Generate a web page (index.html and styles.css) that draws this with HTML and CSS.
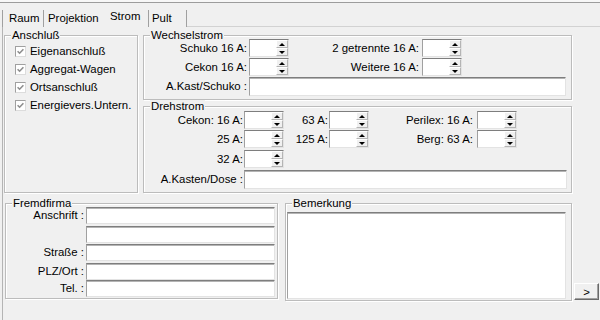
FILE: index.html
```html
<!DOCTYPE html>
<html lang="de">
<head>
    <meta charset="UTF-8">
    <meta name="viewport" content="width=device-width, initial-scale=1.0">
    <title>Strom</title>
    <link rel="stylesheet" href="styles.css">
</head>
<body>
<div class="topline"></div>
<div class="tabs">
    <div class="tab tab-raum">Raum</div>
    <div class="tab tab-projektion">Projektion</div>
    <div class="tab tab-strom active">Strom</div>
    <div class="tab tab-pult">Pult</div>
    <div class="tab-fill"></div>
</div>
<div class="panel">
    <div class="top-row">
        <div class="group anschluss">
            <span class="group-title">Anschluß</span>
            <label class="check"><span class="box"><svg width="7" height="7" viewBox="0 0 7 7"><path d="M0.6 3.2 L2.6 5.2 L6.4 1.2" fill="none" stroke="#8e8e8e" stroke-width="1.6"/></svg></span>Eigenanschluß</label>
            <label class="check"><span class="box"><svg width="7" height="7" viewBox="0 0 7 7"><path d="M0.6 3.2 L2.6 5.2 L6.4 1.2" fill="none" stroke="#8e8e8e" stroke-width="1.6"/></svg></span>Aggregat-Wagen</label>
            <label class="check"><span class="box"><svg width="7" height="7" viewBox="0 0 7 7"><path d="M0.6 3.2 L2.6 5.2 L6.4 1.2" fill="none" stroke="#8e8e8e" stroke-width="1.6"/></svg></span>Ortsanschluß</label>
            <label class="check"><span class="box"><svg width="7" height="7" viewBox="0 0 7 7"><path d="M0.6 3.2 L2.6 5.2 L6.4 1.2" fill="none" stroke="#8e8e8e" stroke-width="1.6"/></svg></span>Energievers.Untern.</label>
        </div>
        <div class="right-col">
            <div class="group wechsel">
                <span class="group-title">Wechselstrom</span>
                <div class="grid wechsel-grid">
                    <span class="lbl row-start">Schuko 16 A:</span>
                    <span class="spin"><input class="spin-field"><span class="spin-btns"><span class="spin-up"></span><span class="spin-down"></span></span></span>
                    <span class="lbl lbl-wide">2 getrennte 16 A:</span>
                    <span class="spin"><input class="spin-field"><span class="spin-btns"><span class="spin-up"></span><span class="spin-down"></span></span></span>

                    <span class="lbl row-start">Cekon 16 A:</span>
                    <span class="spin"><input class="spin-field"><span class="spin-btns"><span class="spin-up"></span><span class="spin-down"></span></span></span>
                    <span class="lbl lbl-wide">Weitere 16 A:</span>
                    <span class="spin"><input class="spin-field"><span class="spin-btns"><span class="spin-up"></span><span class="spin-down"></span></span></span>

                    <span class="lbl row-start">A.Kast/Schuko :</span>
                    <input class="field wide-field">
                </div>
            </div>
            <div class="group dreh">
                <span class="group-title">Drehstrom</span>
                <div class="grid dreh-grid">
                    <span class="lbl row-start">Cekon: 16 A:</span>
                    <span class="spin"><input class="spin-field"><span class="spin-btns"><span class="spin-up"></span><span class="spin-down"></span></span></span>
                    <span class="lbl">63 A:</span>
                    <span class="spin"><input class="spin-field"><span class="spin-btns"><span class="spin-up"></span><span class="spin-down"></span></span></span>
                    <span class="lbl lbl-perilex">Perilex: 16 A:</span>
                    <span class="spin"><input class="spin-field"><span class="spin-btns"><span class="spin-up"></span><span class="spin-down"></span></span></span>

                    <span class="lbl row-start">25 A:</span>
                    <span class="spin"><input class="spin-field"><span class="spin-btns"><span class="spin-up"></span><span class="spin-down"></span></span></span>
                    <span class="lbl">125 A:</span>
                    <span class="spin"><input class="spin-field"><span class="spin-btns"><span class="spin-up"></span><span class="spin-down"></span></span></span>
                    <span class="lbl lbl-perilex">Berg: 63 A:</span>
                    <span class="spin"><input class="spin-field"><span class="spin-btns"><span class="spin-up"></span><span class="spin-down"></span></span></span>

                    <span class="lbl row-start">32 A:</span>
                    <span class="spin"><input class="spin-field"><span class="spin-btns"><span class="spin-up"></span><span class="spin-down"></span></span></span>

                    <span class="lbl row-start">A.Kasten/Dose :</span>
                    <input class="field wide-field">
                </div>
            </div>
        </div>
    </div>
    <div class="bottom-row">
        <div class="group fremd">
            <span class="group-title">Fremdfirma</span>
            <div class="grid fremd-grid">
                <span class="lbl">Anschrift :</span>
                <input class="field">
                <span class="lbl"></span>
                <input class="field">
                <span class="lbl">Straße :</span>
                <input class="field">
                <span class="lbl">PLZ/Ort :</span>
                <input class="field">
                <span class="lbl">Tel. :</span>
                <input class="field">
            </div>
        </div>
        <div class="group bemerk">
            <span class="group-title">Bemerkung</span>
            <textarea class="note"></textarea>
        </div>
        <button class="next">&gt;</button>
    </div>
</div>
</body>
</html>
```

FILE: styles.css
```css
* {
    box-sizing: border-box;
}
body {
    margin: 0;
    width: 600px;
    height: 320px;
    overflow: hidden;
    background-color: #f0f0f0;
    font-family: "Liberation Sans", Arial, sans-serif;
    font-size: 11.4px;
    color: #000;
}
.topline {
    height: 3px;
    background-color: #f7f7f7;
    border-bottom: 1px solid #9c9c9c;
}

/* tab strip */
.tabs {
    display: flex;
    align-items: flex-end;
    height: 24px;
    margin-left: 2px;
}
.tab {
    height: 17px;
    line-height: 16px;
    white-space: nowrap;
}
.tab-raum {
    width: 42px;
    padding-left: 6px;
    border-left: 1px solid #a0a0a0;
    border-right: 1px solid #a0a0a0;
}
.tab-projektion {
    width: 59px;
    padding-left: 4px;
}
.tab.active {
    width: 45px;
    height: 21px;
    padding: 2px 0 0 7px;
}
.tab-pult {
    width: 39px;
    padding-left: 3px;
    border-left: 1px solid #a0a0a0;
    border-right: 1px solid #a0a0a0;
}
.tab-fill {
    flex: 1;
    height: 1px;
    border-bottom: 1px solid #d2d2d2;
}

/* panel */
.panel {
    height: 293px;
    margin-left: 2px;
    padding: 8px 0 0 1px;
    border-left: 1px solid #b4b4b4;
}
.top-row {
    display: flex;
    gap: 5px;
    height: 158px;
}
.group {
    border: 1px solid #bcbcbc;
    box-shadow: inset 1px 1px 0 #fff, 1px 1px 0 #fff;
}
.group-title {
    display: block;
    width: max-content;
    height: 13px;
    margin: -7px 0 0 6px;
    padding: 0 1px;
    line-height: 13px;
    background-color: #f0f0f0;
}

/* Anschluss */
.anschluss {
    width: 134px;
}
.check {
    display: flex;
    align-items: center;
    height: 18px;
    padding-left: 10px;
    white-space: nowrap;
}
.box {
    display: flex;
    align-items: center;
    justify-content: center;
    width: 11px;
    height: 11px;
    margin-right: 4px;
    border: 1px solid;
    border-color: #a0a0a0 #dcdcdc #dcdcdc #a0a0a0;
    background-color: #fff;
}

.right-col {
    display: flex;
    flex-direction: column;
    gap: 6px;
    width: 429px;
}
.wechsel {
    height: 65px;
}
.wechsel .group-title {
    margin-bottom: -3px;
}
.dreh {
    height: 87px;
}
.dreh .group-title {
    margin-bottom: -2px;
}

.grid {
    display: grid;
    align-items: start;
}
.wechsel-grid {
    grid-template-columns: 105px 40px 133px 40px 1fr;
    grid-template-rows: 19px 19px 19px;
}
.dreh-grid {
    grid-template-columns: 100px 40px 45px 40px 108px 40px 1fr;
    grid-template-rows: 19px 20px 20px 19px;
}
.row-start {
    grid-column-start: 1;
}
.lbl {
    padding-right: 2px;
    line-height: 18px;
    text-align: right;
    white-space: nowrap;
}
.wechsel-grid .lbl-wide {
    padding-right: 3px;
}
.dreh-grid .lbl {
    padding-right: 1px;
}
.dreh-grid .lbl-perilex {
    padding-right: 4px;
}

/* inputs */
.field,
.note {
    display: block;
    width: 100%;
    height: 17px;
    margin: 0;
    padding: 0 2px;
    border: 1px solid;
    border-color: #7e7e7e #e3e3e3 #e3e3e3 #a0a0a0;
    box-shadow: inset 0 1px 0 #b4b4b4;
    background-color: #fff;
    font: inherit;
    outline: none;
}
.wechsel .wide-field {
    grid-column: 2 / 6;
    height: 19px;
    margin-right: 5px;
    width: auto;
}
.dreh .wide-field {
    grid-column: 2 / 8;
    height: 19px;
    margin-right: 4px;
    width: auto;
}
.spin {
    display: flex;
    width: 40px;
    height: 18px;
    border: 1px solid;
    border-color: #7e7e7e #e3e3e3 #e3e3e3 #a0a0a0;
    background-color: #fff;
}
.spin-field {
    flex: 1;
    min-width: 0;
    margin: 0;
    padding: 0;
    border: none;
    background: transparent;
    outline: none;
}
.spin-btns {
    display: flex;
    flex-direction: column;
    width: 12px;
}
.spin-up,
.spin-down {
    flex: 1;
    display: flex;
    align-items: center;
    justify-content: center;
    background-color: #f0f0f0;
    border: 1px solid;
    border-color: #fff #b4b4b4 #b4b4b4 #fff;
}
.spin-up::before {
    content: "";
    border-left: 3px solid transparent;
    border-right: 3px solid transparent;
    border-bottom: 3px solid #000;
}
.spin-down::before {
    content: "";
    border-left: 3px solid transparent;
    border-right: 3px solid transparent;
    border-top: 3px solid #000;
}

/* bottom row */
.bottom-row {
    display: flex;
    align-items: flex-start;
    margin-top: 10px;
}
.fremd {
    width: 273px;
    height: 96px;
    margin-left: 1px;
}
.fremd .group-title {
    margin-bottom: -3px;
}
.fremd-grid {
    grid-template-columns: 80px 189px;
    grid-template-rows: 19px 18px 19px 17px 17px;
}
.fremd-grid .lbl {
    line-height: 17px;
}
.bemerk {
    width: 287px;
    height: 98px;
    margin-left: 7px;
}
.bemerk .group-title {
    margin-bottom: 2px;
}
.note {
    width: 279px;
    height: 87px;
    margin-left: 1px;
    resize: none;
}
.next {
    align-self: flex-end;
    width: 25px;
    height: 17px;
    margin: 0 0 1px 2px;
    padding: 0;
    border: 1px solid;
    border-color: #fff #696969 #696969 #fff;
    box-shadow: inset -1px -1px 0 #a0a0a0;
    background-color: #f0f0f0;
    font: inherit;
    line-height: 14px;
}
```
